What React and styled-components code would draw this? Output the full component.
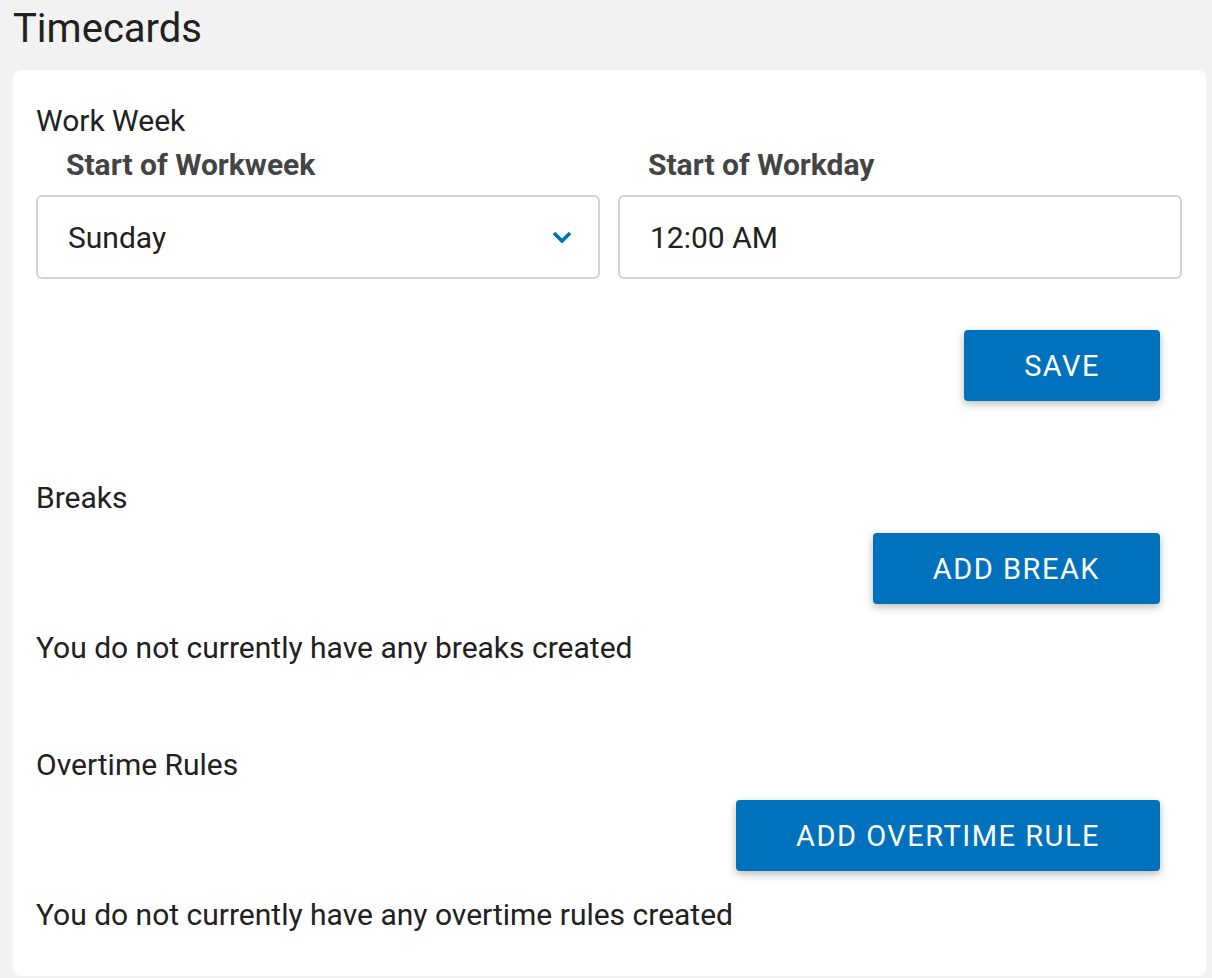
import styled, { createGlobalStyle } from "styled-components";

const GlobalStyle = createGlobalStyle`
  body {
    margin: 0;
    background: #f2f2f2;
    font-family: Roboto, "Liberation Sans", sans-serif;
    color: #212121;
  }
`;

const Page = styled.div`
  padding: 1px 6px 2px 13px;
`;

const Title = styled.h1`
  margin: 0;
  font-size: 40px;
  font-weight: 400;
  line-height: 56px;
  color: #212121;
`;

const Card = styled.div`
  margin-top: 13px;
  background: #fff;
  border-radius: 8px;
  padding: 33px 24px 43px 23px;
`;

const SectionTitle = styled.div`
  font-size: 30px;
  line-height: 36px;
  margin-top: ${(p) => p.$top || 0}px;
`;

const Grid = styled.div`
  display: grid;
  grid-template-columns: 1fr 1fr;
  column-gap: 18px;
  margin-top: 8px;
`;

const Field = styled.div`
  display: flex;
  flex-direction: column;
`;

const Label = styled.label`
  font-size: 30px;
  font-weight: 700;
  line-height: 36px;
  color: #444;
  padding-left: 30px;
  margin-bottom: 12px;
`;

const Box = styled.div`
  height: 84px;
  box-sizing: border-box;
  border: 2px solid #d3d3d3;
  border-radius: 6px;
  display: flex;
  align-items: center;
  justify-content: space-between;
  padding: 0 26px 0 30px;
  font-size: 30px;
  color: #212121;
`;

const ButtonRow = styled.div`
  display: flex;
  justify-content: flex-end;
  padding-right: 22px;
  margin-top: ${(p) => p.$top || 0}px;
`;

const Button = styled.button`
  height: 71px;
  padding: 0 60px;
  border: none;
  border-radius: 4px;
  background: #0071bc;
  color: #fff;
  font-family: Roboto, "Liberation Sans", sans-serif;
  font-size: 29px;
  font-weight: 400;
  letter-spacing: 1.5px;
  text-transform: uppercase;
  box-shadow: 0 3px 8px rgba(0, 0, 0, 0.28);
  cursor: pointer;
`;

const Empty = styled.div`
  font-size: 30px;
  line-height: 36px;
  margin-top: 26px;
`;

const Chevron = () => (
  <svg width="20" height="14" viewBox="0 0 20 14">
    <path d="M2 3 L10 11 L18 3" fill="none" stroke="#0071bc" strokeWidth="3.6" />
  </svg>
);

export default function App() {
  return (
    <Page>
      <GlobalStyle />
      <Title>Timecards</Title>
      <Card>
        <SectionTitle>Work Week</SectionTitle>
        <Grid>
          <Field>
            <Label>Start of Workweek</Label>
            <Box>
              Sunday
              <Chevron />
            </Box>
          </Field>
          <Field>
            <Label>Start of Workday</Label>
            <Box>12:00 AM</Box>
          </Field>
        </Grid>
        <ButtonRow $top={51}>
          <Button>Save</Button>
        </ButtonRow>

        <SectionTitle $top={79}>Breaks</SectionTitle>
        <ButtonRow $top={17}>
          <Button>Add Break</Button>
        </ButtonRow>
        <Empty>You do not currently have any breaks created</Empty>

        <SectionTitle $top={81}>Overtime Rules</SectionTitle>
        <ButtonRow $top={17}>
          <Button>Add Overtime Rule</Button>
        </ButtonRow>
        <Empty>You do not currently have any overtime rules created</Empty>
      </Card>
    </Page>
  );
}
